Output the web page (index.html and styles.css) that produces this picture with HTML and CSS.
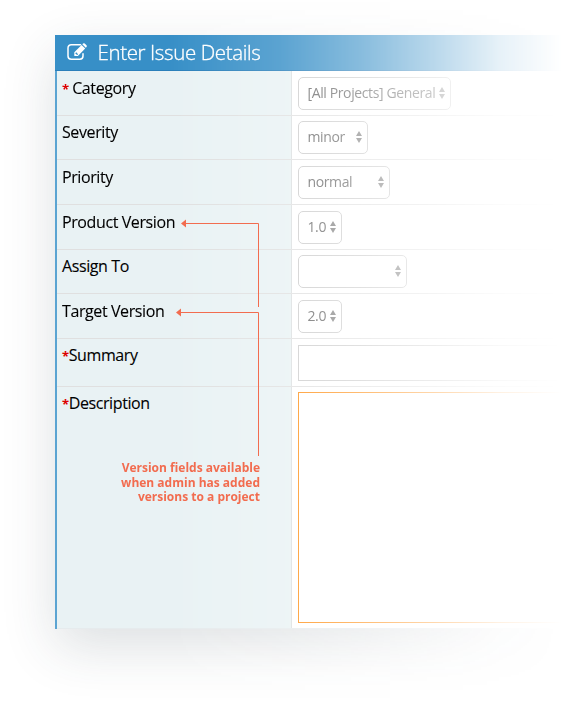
FILE: index.html
```html
<!DOCTYPE html>
<html lang="en">
<head>
<meta charset="utf-8">
<title>Enter Issue Details</title>
<link rel="stylesheet" href="styles.css">
</head>
<body>
<main class="page">
  <form class="panel">
    <header class="head">
      <svg class="edit" viewBox="0 0 20 18" fill="none">
        <path d="M13.500 1.700H4.200A3.200 3.200 0 0 0 1 4.900V13a3.200 3.200 0 0 0 3.200 3.200h8.600A3.200 3.200 0 0 0 16 13v-2.300" stroke="#fff" stroke-width="1.500" stroke-linecap="round"/>
        <path fill="#fff" fill-rule="evenodd" d="M7.300 9.300 14.600 2l3.600 3.600-7.300 7.300H7.300zM8.500 10v1h1v1h.8l.8-.8-1.800-1.900z"/>
        <path fill="#fff" d="m15.300 1.300.8-.8q.8-.7 1.600 0l1.800 1.800q.7.800 0 1.600l-.7.900z"/>
      </svg>
      <h1>Enter Issue Details</h1>
    </header>
    <div class="row"><div class="label"><b class="gap">*</b>Category</div><div class="field"><div class="select w154"><span>[All Projects] General</span><svg class="arrows" viewBox="0 0 6 12"><path d="M0 5 3 0l3 5zM0 7h6l-3 5z"/></svg></div></div></div>
    <div class="row short"><div class="label">Severity</div><div class="field"><div class="select w71"><span>minor</span><svg class="arrows" viewBox="0 0 6 12"><path d="M0 5 3 0l3 5zM0 7h6l-3 5z"/></svg></div></div></div>
    <div class="row"><div class="label">Priority</div><div class="field"><div class="select w93"><span>normal</span><svg class="arrows" viewBox="0 0 6 12"><path d="M0 5 3 0l3 5zM0 7h6l-3 5z"/></svg></div></div></div>
    <div class="row"><div class="label">Product Version</div><div class="field"><div class="select w45"><span>1.0</span><svg class="arrows" viewBox="0 0 6 12"><path d="M0 5 3 0l3 5zM0 7h6l-3 5z"/></svg></div></div></div>
    <div class="row short"><div class="label">Assign To</div><div class="field"><div class="select w110"><span></span><svg class="arrows" viewBox="0 0 6 12"><path d="M0 5 3 0l3 5zM0 7h6l-3 5z"/></svg></div></div></div>
    <div class="row"><div class="label">Target Version</div><div class="field"><div class="select w45"><span>2.0</span><svg class="arrows" viewBox="0 0 6 12"><path d="M0 5 3 0l3 5zM0 7h6l-3 5z"/></svg></div></div></div>
    <div class="row summary"><div class="label"><b>*</b>Summary</div><div class="field"><div class="input"></div></div></div>
    <div class="row description"><div class="label"><b>*</b>Description</div><div class="field"><div class="textarea"></div></div></div>
  </form>
</main>
<svg class="callout" viewBox="0 0 84 235">
  <path d="M9 2.500H82.500V86M5 91.500H82.500V235" fill="none" stroke="#f26c4f"/>
  <path d="m5 2.500 5-4v8zM0 91.500l5-4v8z" fill="#f26c4f"/>
</svg>
<p class="note">Version fields available<br>when admin has added<br>versions to a project</p>
</body>
</html>
```
FILE: styles.css
```css
* { box-sizing: border-box; }
body { margin: 0; background: #fff; font-family: "Open Sans", sans-serif; overflow: hidden; }

/* The whole sheet, shadow included, fades out to the right */
.page {
  width: 588px;
  height: 704px;
  padding: 35px 0 0 55px;
  -webkit-mask-image: linear-gradient(90deg, #000 170px, rgba(0,0,0,.82) 280px, rgba(0,0,0,.6) 360px, rgba(0,0,0,.33) 440px, rgba(0,0,0,.12) 500px, transparent 562px);
  mask-image: linear-gradient(90deg, #000 170px, rgba(0,0,0,.82) 280px, rgba(0,0,0,.6) 360px, rgba(0,0,0,.33) 440px, rgba(0,0,0,.12) 500px, transparent 562px);
}
.panel {
  width: 533px;
  height: 594px;
  background: #fff;
  border-left: 2px solid #5ba4d2;
  box-shadow: 0 18px 50px rgba(45, 65, 75, .16);
}
.head {
  display: flex;
  align-items: center;
  height: 36px;
  margin-left: -2px;
  padding: 0 0 2px 12px;
  color: #fff;
  background: #378fc7;
  border-bottom: 1px solid #2a7fba;
}
.edit { width: 20px; height: 18px; }
.head h1 { margin: 2px 0 0 10.5px; font-size: 20.5px; font-weight: 300; letter-spacing: -.38px; line-height: 33px; white-space: nowrap; -webkit-text-stroke: .3px #fff; }
.row { display: flex; height: 45px; border-bottom: 1px solid #e0e0e0; }
.short { height: 44px; }
.summary { height: 48px; }
.description { height: 242px; border-bottom-color: #e6ebed; }
.label {
  width: 235px;
  flex: none;
  padding: 6px 0 0 5px;
  background: #e9f2f4;
  border-right: 1px solid #dcdfe0;
  color: #000;
  font-size: 16px;
  letter-spacing: -.4px;
  line-height: 22px;
  white-space: nowrap;
  -webkit-text-stroke: .1px #000;
}
.short .label, .summary .label, .description .label { padding-top: 5px; }
.label b { color: #d00; font-size: 13px; font-weight: 700; -webkit-text-stroke: 0; }
.label .gap { margin-right: 3.5px; }
.field { flex: 1; padding: 6px 0 0 6px; }
.short .field { padding-top: 5px; }
.select {
  display: flex;
  align-items: center;
  justify-content: space-between;
  height: 33px;
  padding: 0 5px 2px 8.5px;
  border: 1px solid #ccc;
  border-radius: 5px;
  color: #666;
  font-size: 14px;
  letter-spacing: -.38px;
  white-space: nowrap;
}
.w154 { width: 153px; }
.w71 { width: 70px; }
.w93 { width: 92px; }
.w45 { width: 44px; }
.w110 { width: 109px; }
.arrows { width: 6px; height: 12px; flex: none; margin-top: 1px; fill: #808080; }
.input { height: 36px; border: 1px solid #ccc; }
.description .field { padding-top: 5px; }
.textarea { height: 231px; border: 1px solid #ff8f14; }

/* Annotation drawn over the form */
.callout { position: absolute; left: 176px; top: 221px; width: 84px; height: 235px; overflow: visible; }
.note {
  position: absolute;
  left: 100px;
  top: 461px;
  width: 160px;
  margin: 0;
  color: #f26c4f;
  font-size: 12px;
  font-weight: 700;
  line-height: 14.5px;
  text-align: right;
  white-space: nowrap;
}
```
